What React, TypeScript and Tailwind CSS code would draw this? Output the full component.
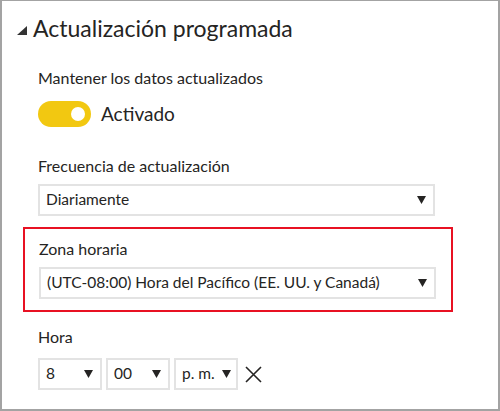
import React from 'react';

function Caret() {
  return (
    <svg width="9" height="8" viewBox="0 0 9 8" className="shrink-0">
      <path d="M0 0 L9 0 L4.5 8 Z" fill="#252423" />
    </svg>
  );
}

function Select({ value, className }: { value: string; className: string }) {
  return (
    <div
      className={`flex items-center justify-between h-[32px] border-2 border-[#e3e3e3] bg-white pl-[6px] pr-[7px] text-[15.5px] text-[#252423] ${className}`}
    >
      <span className="whitespace-nowrap">{value}</span>
      <Caret />
    </div>
  );
}

export default function App() {
  return (
    <div className="w-[500px] h-[411px] bg-white border-t border-l-2 border-r-2 border-b-2 border-[#a3a3a3] font-['Lato',sans-serif] text-[#252423]">
      <div className="flex items-center pl-[15px] pt-[12px]">
        <svg width="10" height="9" viewBox="0 0 10 9" className="mt-[4px]">
          <path d="M10 0 L10 9 L0 9 Z" fill="#333333" />
        </svg>
        <h1 className="ml-[6px] text-[23px] leading-[30px]">Actualización programada</h1>
      </div>

      <div className="pl-[36px]">
        <p className="mt-[25px] text-[16px] leading-[20px]">Mantener los datos actualizados</p>
        <div className="mt-[13px] flex items-center">
          <div className="w-[53px] h-[26px] rounded-full bg-[#f2c811] flex items-center justify-end pr-[6px]">
            <div className="w-[14px] h-[14px] rounded-full bg-white" />
          </div>
          <span className="ml-[10px] text-[19px] leading-[24px]">Activado</span>
        </div>

        <p className="mt-[29px] text-[16px] leading-[20px]">Frecuencia de actualización</p>
        <Select value="Diariamente" className="mt-[8px] w-[397px]" />
      </div>

      <div className="ml-[21px] mt-[11px] w-[430px] h-[85px] border-2 border-[#e81123] pl-[14px]">
        <p className="mt-[10px] text-[16px] leading-[20px]">Zona horaria</p>
        <Select value="(UTC-08:00) Hora del Pacífico (EE. UU. y Canadá)" className="mt-[8px] w-[397px]" />
      </div>

      <div className="pl-[36px]">
        <p className="mt-[15px] text-[16px] leading-[20px]">Hora</p>
        <div className="mt-[11px] flex items-center">
          <Select value="8" className="w-[64px]" />
          <Select value="00" className="ml-[4px] w-[64px]" />
          <Select value="p. m." className="ml-[4px] w-[64px] !pr-[5px]" />
          <svg width="17" height="17" viewBox="0 0 17 17" className="ml-[7px]">
            <path d="M1 1 L16 16 M16 1 L1 16" stroke="#252423" strokeWidth="1.6" />
          </svg>
        </div>
      </div>
    </div>
  );
}
